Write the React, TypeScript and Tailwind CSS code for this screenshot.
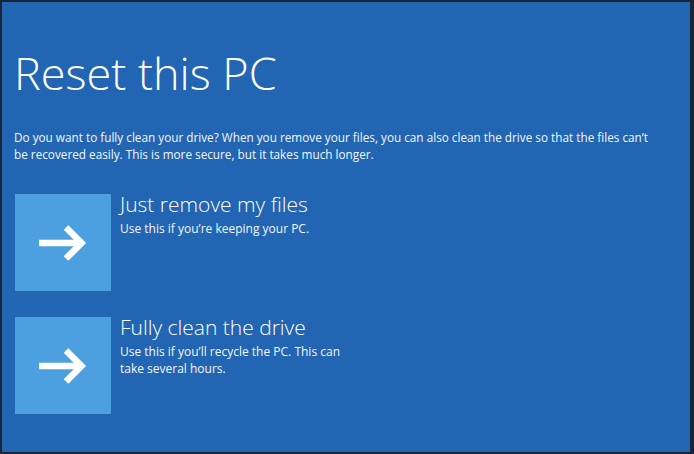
import React from 'react';

const options = [
  {
    title: 'Just remove my files',
    text: 'Use this if you’re keeping your PC.',
  },
  {
    title: 'Fully clean the drive',
    text: 'Use this if you’ll recycle the PC. This can take several hours.',
  },
];

const ArrowTile = () => (
  <div className="w-[96px] h-[97px] shrink-0 bg-[#4ca0df] flex items-center justify-center">
    <svg width="48" height="38" viewBox="0 0 48 38" fill="none">
      <path d="M0 19H43" stroke="white" strokeWidth="6.5" />
      <path d="M27 3.5L42.5 19L27 34.5" stroke="white" strokeWidth="6.5" strokeLinejoin="miter" />
    </svg>
  </div>
);

export default function App() {
  return (
    <div className="w-[694px] h-[454px] bg-[#1a2535] pt-[2px] pl-[2px] pr-[4px] pb-[2px]">
      <div
        className="h-full bg-[#2265b3] text-white pl-[12px] pt-[48px]"
        style={{ fontFamily: '"Open Sans", "Noto Sans", sans-serif' }}
      >
        <h1 className="text-[45px] font-light leading-none">Reset this PC</h1>

        <p className="mt-[34px] text-[11.75px] leading-[17px] text-[#f2f6fb]">
          Do you want to fully clean your drive? When you remove your files, you can also clean the drive so that the files can’t
          <br />
          be recovered easily. This is more secure, but it takes much longer.
        </p>

        <div className="mt-[31px] flex flex-col gap-[26px] pl-[1px]">
          {options.map((o) => (
            <div key={o.title} className="flex gap-[9px]">
              <ArrowTile />
              <div className="w-[234px]">
                <div className="text-[21px] font-light leading-[20px]">{o.title}</div>
                <div className="mt-[6px] text-[12px] leading-[17px] text-[#f2f6fb]">{o.text}</div>
              </div>
            </div>
          ))}
        </div>
      </div>
    </div>
  );
}
